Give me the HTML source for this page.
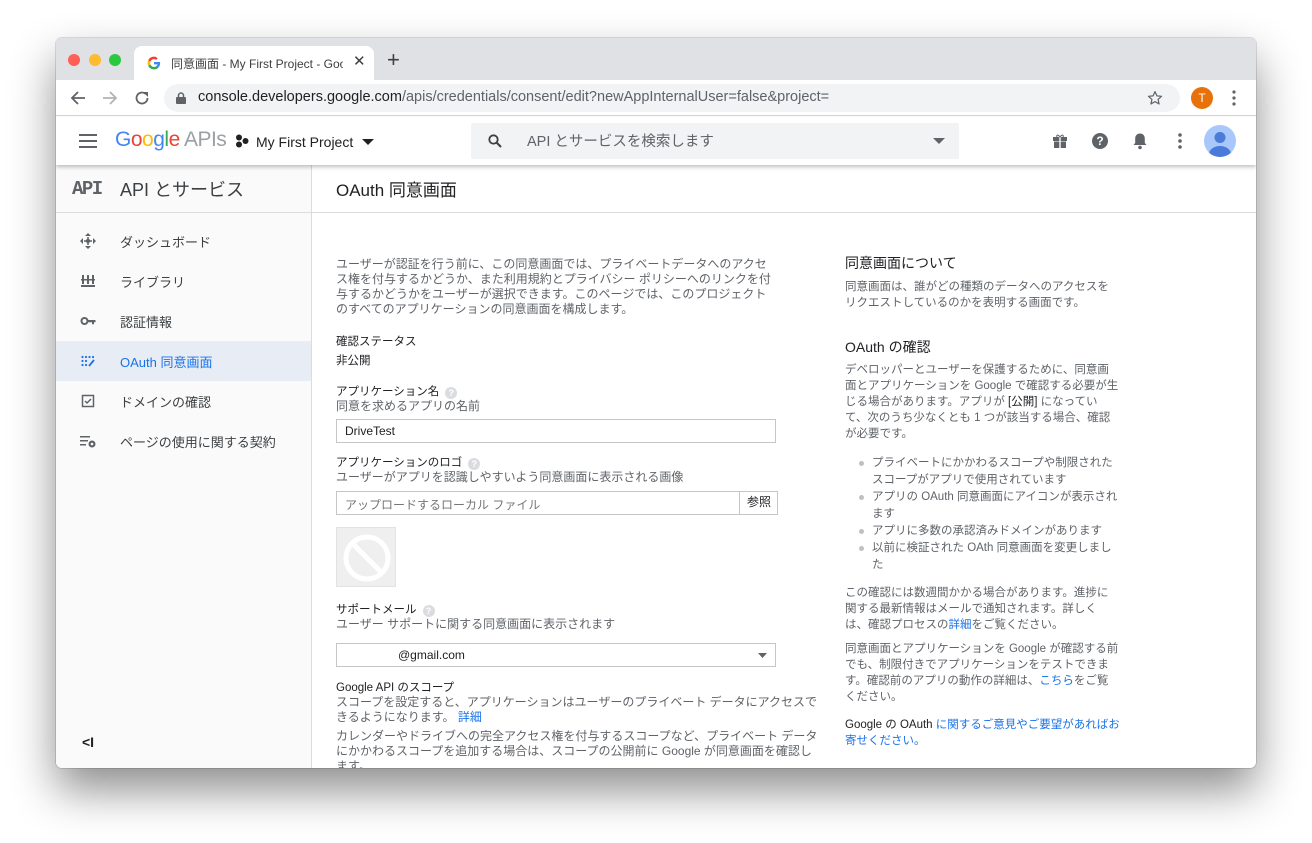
<!DOCTYPE html>
<html><head><meta charset="utf-8">
<style>
*{box-sizing:border-box;margin:0;padding:0}
body{width:1312px;height:843px;background:#fff;font-family:"Liberation Sans","Noto Sans CJK JP",sans-serif;position:relative;overflow:hidden;color:#202124}
.win{position:absolute;left:56px;top:38px;width:1200px;height:730px;border-radius:6px;overflow:hidden;box-shadow:0 22px 45px rgba(0,0,0,.45),0 0 0 1px rgba(0,0,0,.12);background:#fff}
.a{position:absolute;white-space:nowrap}
.tabs{position:absolute;left:0;top:0;width:1200px;height:42px;background:#dfe1e5}
.dot{position:absolute;top:16px;width:12px;height:12px;border-radius:50%}
.tab{position:absolute;left:78px;top:8px;width:240px;height:34px;background:#fff;border-radius:8px 8px 0 0}
.toolbar{position:absolute;left:0;top:42px;width:1200px;height:36px;background:#fff;border-bottom:1px solid #d6d6d6}
.omni{position:absolute;left:108px;top:4px;width:1016px;height:28px;background:#f1f3f4;border-radius:14px}
.hdr{position:absolute;left:0;top:79px;width:1200px;height:48px;background:#fff;box-shadow:0 2px 4px rgba(0,0,0,.25);z-index:3}
.side{position:absolute;left:0;top:127px;width:256px;height:603px;background:#fafafa;border-right:1px solid #dadce0}
.item{position:absolute;left:0;width:255px;height:40px;font-size:13px;color:#3c4043}
.item span{position:absolute;left:64px;top:11px}
.item svg{position:absolute;left:24px;top:12px}
.main{position:absolute;left:256px;top:127px;width:944px;height:603px}
.p{font-size:12px;line-height:15px;color:#5f6368}
.lbl{font-size:11.5px;line-height:15px;color:#202124}
.q{display:inline-block;width:12px;height:12px;border-radius:50%;background:#dadce0;color:#fff;font-size:9px;text-align:center;line-height:12px;margin-left:6px;vertical-align:-1px;font-weight:bold}
.inp{position:absolute;border:1px solid #c6c6c6;background:#fff;height:24px;font-size:12px}
.r{font-size:11.5px;line-height:16px;color:#5f6368}
a{color:#1a73e8;text-decoration:none}
.b{position:relative;padding-left:14px}
.b:before{content:"";position:absolute;left:1px;top:6px;width:5px;height:5px;border-radius:50%;background:#bdc1c6}
</style></head><body>
<div class="win">
 <div class="tabs">
  <div class="dot" style="left:12px;background:#fe5f57"></div>
  <div class="dot" style="left:33px;background:#febc2e"></div>
  <div class="dot" style="left:53px;background:#28c840"></div>
  <div class="tab">
   <svg class="a" style="left:13px;top:10px" width="14" height="14" viewBox="0 0 48 48"><path fill="#4285F4" d="M45 24.5c0-1.6-.1-2.8-.4-4H24v8h11.9c-.5 3-2.3 5.3-5 6.9l7 5.4C42 36.9 45 31.3 45 24.5z"/><path fill="#34A853" d="M24 46c5.9 0 10.9-2 14.5-5.3l-7-5.4c-1.9 1.3-4.4 2.2-7.5 2.2-5.8 0-10.7-3.9-12.4-9.2l-7.3 5.6C7.9 41.1 15.4 46 24 46z"/><path fill="#FBBC05" d="M11.6 28.3c-.4-1.3-.7-2.7-.7-4.3s.3-3 .7-4.3L4.3 14C2.8 17 2 20.4 2 24s.8 7 2.3 10z"/><path fill="#EA4335" d="M24 10.5c3.5 0 6 1.5 7.4 2.8l5.5-5.4C33.9 4.9 29.4 2 24 2 15.4 2 7.9 6.9 4.3 14l7.3 5.7c1.7-5.3 6.6-9.2 12.4-9.2z"/></svg>
   <div class="a" style="left:37px;top:9px;font-size:12px;color:#3c4043;width:172px;overflow:hidden">同意画面 - My First Project - Goo</div>
   <div class="a" style="left:219px;top:6px;font-size:15px;color:#3c4043">✕</div>
  </div>
  <div class="a" style="left:331px;top:9px;font-size:22px;color:#3c4043;font-weight:300">+</div>
 </div>
 <div class="toolbar">
  <svg class="a" style="left:14px;top:10px" width="16" height="16" viewBox="0 0 16 16"><path d="M15 8H2M8 2L2 8l6 6" stroke="#5f6368" stroke-width="1.8" fill="none"/></svg>
  <svg class="a" style="left:46px;top:10px" width="16" height="16" viewBox="0 0 16 16"><path d="M1 8h13M8 2l6 6-6 6" stroke="#b0b3b8" stroke-width="1.8" fill="none"/></svg>
  <svg class="a" style="left:78px;top:10px" width="16" height="16" viewBox="0 0 16 16"><path d="M13.5 8A5.5 5.5 0 1 1 11.5 3.8" stroke="#5f6368" stroke-width="1.8" fill="none"/><path d="M9 2h5v5z" fill="#5f6368"/></svg>
  <div class="omni">
   <svg class="a" style="left:12px;top:8px" width="10" height="12" viewBox="0 0 10 12"><rect x="0" y="5" width="10" height="7" rx="1" fill="#5f6368"/><path d="M2.5 5V3.5a2.5 2.5 0 0 1 5 0V5" stroke="#5f6368" stroke-width="1.5" fill="none"/></svg>
   <div class="a" style="left:34px;top:5px;font-size:14.5px;color:#202124">console.developers.google.com<span style="color:#5f6368">/apis/credentials/consent/edit?newAppInternalUser=false&amp;project=</span></div>
   <svg class="a" style="left:983px;top:6px" width="16" height="16" viewBox="0 0 24 24"><path d="M12 2.5l2.9 6.3 6.9.7-5.2 4.6 1.5 6.8L12 17.4l-6.1 3.5 1.5-6.8-5.2-4.6 6.9-.7z" stroke="#5f6368" stroke-width="1.8" fill="none" stroke-linejoin="round"/></svg>
  </div>
  <div class="a" style="left:1135px;top:7px;width:22px;height:22px;border-radius:50%;background:#e8710a;color:#fff;font-size:12px;text-align:center;line-height:22px">T</div>
  <svg class="a" style="left:1176px;top:10px" width="4" height="16"><circle cx="2" cy="2" r="1.6" fill="#5f6368"/><circle cx="2" cy="8" r="1.6" fill="#5f6368"/><circle cx="2" cy="14" r="1.6" fill="#5f6368"/></svg>
 </div>
 <div class="hdr">
  <svg class="a" style="left:23px;top:17px" width="18" height="14"><rect y="0" width="18" height="2" fill="#5f6368"/><rect y="6" width="18" height="2" fill="#5f6368"/><rect y="12" width="18" height="2" fill="#5f6368"/></svg>
  <div class="a" style="left:59px;top:11px;font-size:21px;letter-spacing:-.5px"><span style="color:#4285f4">G</span><span style="color:#ea4335">o</span><span style="color:#fbbc05">o</span><span style="color:#4285f4">g</span><span style="color:#34a853">l</span><span style="color:#ea4335">e</span> <span style="color:#9aa0a6">APIs</span></div>
  <svg class="a" style="left:179px;top:17px" width="14" height="14"><circle cx="4" cy="3.5" r="3" fill="#202124"/><circle cx="4" cy="10.5" r="3" fill="#202124"/><circle cx="10.5" cy="7" r="3" fill="#202124"/></svg>
  <div class="a" style="left:200px;top:17px;font-size:14px">My First Project</div>
  <svg class="a" style="left:306px;top:22px" width="12" height="6"><path d="M0 0h12L6 6z" fill="#202124"/></svg>
  <div class="a" style="left:415px;top:6px;width:488px;height:36px;background:#f1f3f4;border-radius:2px">
   <svg class="a" style="left:17px;top:11px" width="14" height="14" viewBox="0 0 14 14"><circle cx="5.5" cy="5.5" r="4.2" stroke="#3c4043" stroke-width="1.8" fill="none"/><path d="M8.5 8.5L13 13" stroke="#3c4043" stroke-width="2"/></svg>
   <div class="a" style="left:56px;top:7px;font-size:14.5px;color:#5f6368">API とサービスを検索します</div>
   <svg class="a" style="left:462px;top:15px" width="12" height="6"><path d="M0 0h12L6 6z" fill="#5f6368"/></svg>
  </div>
  <svg class="a" style="left:997px;top:17px" width="14" height="14" viewBox="0 0 14 14"><rect x="0" y="3" width="14" height="4" fill="#5f6368"/><rect x="1" y="7.5" width="12" height="6.5" fill="#5f6368"/><rect x="6.3" y="3" width="1.4" height="11" fill="#fff"/><path d="M7 3C5 0 3 1 4 3M7 3c2-3 4-2 3 0" stroke="#5f6368" fill="none"/></svg>
  <div class="a" style="left:1036px;top:16px;width:16px;height:16px;border-radius:50%;background:#5f6368;color:#fff;font-size:12px;font-weight:bold;text-align:center;line-height:16px">?</div>
  <svg class="a" style="left:1077px;top:15px" width="14" height="18" viewBox="0 0 14 18"><path d="M7 1.5c3 0 4.8 2.2 4.8 5v4.5L13.5 13H.5l1.7-2V6.5c0-2.8 1.8-5 4.8-5z" fill="#5f6368"/><circle cx="7" cy="15.5" r="1.8" fill="#5f6368"/></svg>
  <svg class="a" style="left:1122px;top:16px" width="4" height="16"><circle cx="2" cy="2" r="1.8" fill="#5f6368"/><circle cx="2" cy="8" r="1.8" fill="#5f6368"/><circle cx="2" cy="14" r="1.8" fill="#5f6368"/></svg>
  <svg class="a" style="left:1148px;top:8px" width="32" height="32" viewBox="0 0 32 32"><defs><clipPath id="c"><circle cx="16" cy="16" r="16"/></clipPath></defs><circle cx="16" cy="16" r="16" fill="#a8c7fa"/><g clip-path="url(#c)" fill="#4a7bd8"><circle cx="16" cy="12.5" r="5.5"/><ellipse cx="16" cy="29" rx="11" ry="8"/></g></svg>
 </div>
 <div class="side">
  <div style="position:absolute;left:0;top:0;width:255px;height:48px;border-bottom:1px solid #dadce0">
   <div class="a" style="left:16px;top:13px;font-family:'Liberation Mono',monospace;font-weight:bold;font-size:19px;color:#5f6368;letter-spacing:-1.5px">API</div>
   <div class="a" style="left:64px;top:11px;font-size:18px;color:#3c4043">API とサービス</div>
  </div>
  <div class="item" style="top:56px"><svg width="16" height="16" viewBox="0 0 16 16" fill="#5f6368"><path d="M8 0l3 3H5zM8 16l-3-3h6zM0 8l3-3v6zM16 8l-3 3V5z"/><circle cx="8" cy="8" r="2.2"/><circle cx="5" cy="8" r="1"/><circle cx="11" cy="8" r="1"/><circle cx="8" cy="5" r="1"/><circle cx="8" cy="11" r="1"/></svg><span>ダッシュボード</span></div>
  <div class="item" style="top:96px"><svg width="16" height="16" viewBox="0 0 16 16" fill="#5f6368"><rect x="2" y="2" width="2" height="9"/><rect x="7" y="2" width="2" height="9"/><rect x="12" y="2" width="2" height="9"/><rect x="1" y="6" width="14" height="1.5"/><rect x="1" y="12" width="14" height="2"/></svg><span>ライブラリ</span></div>
  <div class="item" style="top:136px"><svg width="16" height="16" viewBox="0 0 16 16"><circle cx="4.5" cy="8" r="3" stroke="#5f6368" stroke-width="2" fill="none"/><path d="M7.5 7h8v2.2h-1.5v2h-2v-2h-4.5z" fill="#5f6368"/></svg><span>認証情報</span></div>
  <div class="item" style="top:176px;background:#e8ecf5;color:#1a73e8"><svg width="16" height="16" viewBox="0 0 16 16" fill="#1a73e8"><circle cx="2.5" cy="4" r="1.1"/><circle cx="6" cy="4" r="1.1"/><circle cx="9.5" cy="4" r="1.1"/><circle cx="13" cy="4" r="1.1"/><circle cx="2.5" cy="8" r="1.1"/><circle cx="6" cy="8" r="1.1"/><circle cx="2.5" cy="12" r="1.1"/><circle cx="6" cy="12" r="1.1"/><path d="M9 13l5-6" stroke="#1a73e8" stroke-width="1.8"/></svg><span>OAuth 同意画面</span></div>
  <div class="item" style="top:216px"><svg width="16" height="16" viewBox="0 0 16 16"><rect x="2.5" y="2.5" width="11" height="11" stroke="#5f6368" stroke-width="1.5" fill="none"/><path d="M5 8l2 2 4-4" stroke="#5f6368" stroke-width="1.5" fill="none"/></svg><span>ドメインの確認</span></div>
  <div class="item" style="top:256px"><svg width="16" height="16" viewBox="0 0 16 16" fill="#5f6368"><rect x="0" y="3" width="10" height="1.5"/><rect x="0" y="7" width="8" height="1.5"/><rect x="0" y="11" width="6" height="1.5"/><circle cx="12" cy="11" r="3.5"/><circle cx="12" cy="11" r="1.3" fill="#fafafa"/></svg><span>ページの使用に関する契約</span></div>
  <div class="a" style="left:26px;top:569px;font-size:14px;font-weight:bold;color:#202124">&lt;I</div>
 </div>
 <div class="main">
  <div style="position:absolute;left:0;top:0;width:944px;height:48px;border-bottom:1px solid #dadce0"></div>
  <div class="a" style="left:24px;top:11px;font-size:17px;color:#202124">OAuth 同意画面</div>
  <div class="a p" style="left:24px;top:92px">ユーザーが認証を行う前に、この同意画面では、プライベートデータへのアクセ<br>ス権を付与するかどうか、また利用規約とプライバシー ポリシーへのリンクを付<br>与するかどうかをユーザーが選択できます。このページでは、このプロジェクト<br>のすべてのアプリケーションの同意画面を構成します。</div>
  <div class="a lbl" style="left:24px;top:170px">確認ステータス</div>
  <div class="a lbl" style="left:24px;top:189px">非公開</div>
  <div class="a lbl" style="left:24px;top:220px">アプリケーション名<span class="q">?</span></div>
  <div class="a p" style="left:24px;top:234px">同意を求めるアプリの名前</div>
  <div class="inp" style="left:24px;top:254px;width:440px"><span class="a" style="left:8px;top:4px">DriveTest</span></div>
  <div class="a lbl" style="left:24px;top:291px">アプリケーションのロゴ<span class="q">?</span></div>
  <div class="a p" style="left:24px;top:305px">ユーザーがアプリを認識しやすいよう同意画面に表示される画像</div>
  <div class="inp" style="left:24px;top:326px;width:442px;color:#757575"><span class="a" style="left:8px;top:4px">アップロードするローカル ファイル</span><div class="a" style="left:402px;top:-1px;width:39px;height:24px;border-left:1px solid #c6c6c6;text-align:center;line-height:23px;color:#202124;font-size:12px">参照</div></div>
  <div class="a" style="left:24px;top:362px;width:60px;height:60px;background:#efefef;border:1px solid #e2e2e2">
   <svg class="a" style="left:5px;top:5px" width="50" height="50" viewBox="0 0 50 50"><circle cx="25" cy="25" r="21" stroke="#fff" stroke-width="5" fill="none"/><path d="M11 11l28 28" stroke="#fff" stroke-width="5"/></svg>
  </div>
  <div class="a lbl" style="left:24px;top:438px">サポートメール<span class="q">?</span></div>
  <div class="a p" style="left:24px;top:452px">ユーザー サポートに関する同意画面に表示されます</div>
  <div class="inp" style="left:24px;top:478px;width:440px"><span class="a" style="left:61px;top:4px">@gmail.com</span><svg class="a" style="left:421px;top:9px" width="9" height="5"><path d="M0 0h9L4.5 5z" fill="#5f6368"/></svg></div>
  <div class="a lbl" style="left:24px;top:516px">Google API のスコープ</div>
  <div class="a p" style="left:24px;top:530px">スコープを設定すると、アプリケーションはユーザーのプライベート データにアクセスで<br>きるようになります。 <a>詳細</a></div>
  <div class="a p" style="left:24px;top:564px">カレンダーやドライブへの完全アクセス権を付与するスコープなど、プライベート データ<br>にかかわるスコープを追加する場合は、スコープの公開前に Google が同意画面を確認し<br>ます。</div>

  <div class="a" style="left:533px;top:89px;font-size:14px;line-height:18px;color:#202124">同意画面について</div>
  <div class="a r" style="left:533px;top:114px">同意画面は、誰がどの種類のデータへのアクセスを<br>リクエストしているのかを表明する画面です。</div>
  <div class="a" style="left:533px;top:173px;font-size:14px;line-height:18px;color:#202124">OAuth の確認</div>
  <div class="a r" style="left:533px;top:197px">デベロッパーとユーザーを保護するために、同意画<br>面とアプリケーションを Google で確認する必要が生<br>じる場合があります。アプリが <span style="color:#202124">[公開]</span> になってい<br>て、次のうち少なくとも 1 つが該当する場合、確認<br>が必要です。</div>
  <div class="a r" style="left:546px;top:290px;line-height:17px">
   <div class="b">プライベートにかかわるスコープや制限された<br>スコープがアプリで使用されています</div>
   <div class="b">アプリの OAuth 同意画面にアイコンが表示され<br>ます</div>
   <div class="b">アプリに多数の承認済みドメインがあります</div>
   <div class="b">以前に検証された OAth 同意画面を変更しまし<br>た</div>
  </div>
  <div class="a r" style="left:533px;top:420px">この確認には数週間かかる場合があります。進捗に<br>関する最新情報はメールで通知されます。詳しく<br>は、確認プロセスの<a>詳細</a>をご覧ください。</div>
  <div class="a r" style="left:533px;top:476px">同意画面とアプリケーションを Google が確認する前<br>でも、制限付きでアプリケーションをテストできま<br>す。確認前のアプリの動作の詳細は、<a>こちら</a>をご覧<br>ください。</div>
  <div class="a r" style="left:533px;top:552px;color:#202124">Google の OAuth <a>に関するご意見やご要望があればお</a><br><a>寄せください。</a></div>
 </div>
</div>
</body></html>
